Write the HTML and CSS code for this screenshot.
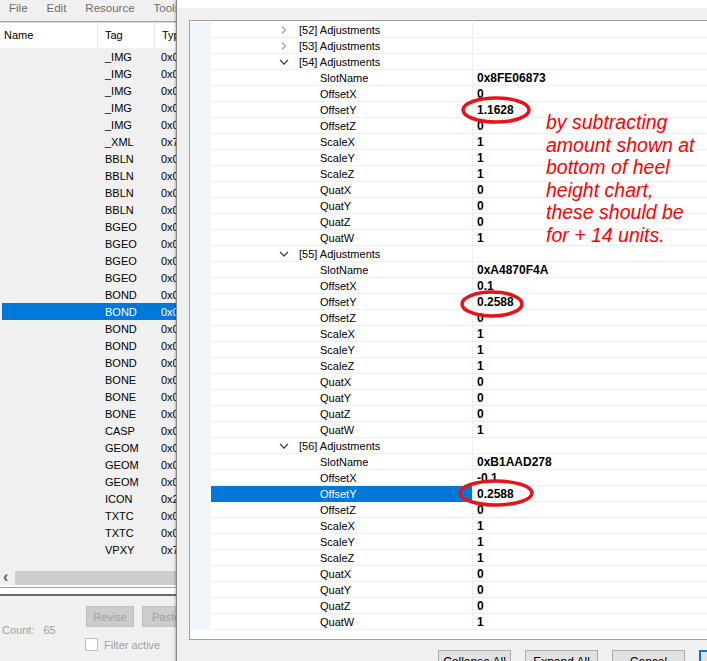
FILE: index.html
```html
<!DOCTYPE html>
<html lang="en">
<head>
  <meta charset="UTF-8">
  <title>Resource Editor</title>
  <link rel="stylesheet" href="styles.css">
</head>
<body>

<div class="main">
  <div class="menubar">
    <span>File</span>
    <span>Edit</span>
    <span>Resource</span>
    <span>Tools</span>
  </div>

  <div class="list-head">
    <div class="hcell name">Name</div>
    <div class="hcell">Tag</div>
    <div class="hcell">Type</div>
  </div>

  <div class="list">
    <div class="lrow"><span></span><span class="tag">_IMG</span><span class="type">0x00B2D882</span></div>
    <div class="lrow"><span></span><span class="tag">_IMG</span><span class="type">0x00B2D882</span></div>
    <div class="lrow"><span></span><span class="tag">_IMG</span><span class="type">0x00B2D882</span></div>
    <div class="lrow"><span></span><span class="tag">_IMG</span><span class="type">0x00B2D882</span></div>
    <div class="lrow"><span></span><span class="tag">_IMG</span><span class="type">0x00B2D882</span></div>
    <div class="lrow"><span></span><span class="tag">_XML</span><span class="type">0x73E93EEB</span></div>
    <div class="lrow"><span></span><span class="tag">BBLN</span><span class="type">0x00DE5AC5</span></div>
    <div class="lrow"><span></span><span class="tag">BBLN</span><span class="type">0x00DE5AC5</span></div>
    <div class="lrow"><span></span><span class="tag">BBLN</span><span class="type">0x00DE5AC5</span></div>
    <div class="lrow"><span></span><span class="tag">BBLN</span><span class="type">0x00DE5AC5</span></div>
    <div class="lrow"><span></span><span class="tag">BGEO</span><span class="type">0x067CAA11</span></div>
    <div class="lrow"><span></span><span class="tag">BGEO</span><span class="type">0x067CAA11</span></div>
    <div class="lrow"><span></span><span class="tag">BGEO</span><span class="type">0x067CAA11</span></div>
    <div class="lrow"><span></span><span class="tag">BGEO</span><span class="type">0x067CAA11</span></div>
    <div class="lrow"><span></span><span class="tag">BOND</span><span class="type">0x0355E0A6</span></div>
    <div class="lrow selected"><span></span><span class="tag">BOND</span><span class="type">0x0355E0A6</span></div>
    <div class="lrow"><span></span><span class="tag">BOND</span><span class="type">0x0355E0A6</span></div>
    <div class="lrow"><span></span><span class="tag">BOND</span><span class="type">0x0355E0A6</span></div>
    <div class="lrow"><span></span><span class="tag">BOND</span><span class="type">0x0355E0A6</span></div>
    <div class="lrow"><span></span><span class="tag">BONE</span><span class="type">0x00AE6C67</span></div>
    <div class="lrow"><span></span><span class="tag">BONE</span><span class="type">0x00AE6C67</span></div>
    <div class="lrow"><span></span><span class="tag">BONE</span><span class="type">0x00AE6C67</span></div>
    <div class="lrow"><span></span><span class="tag">CASP</span><span class="type">0x034AEECB</span></div>
    <div class="lrow"><span></span><span class="tag">GEOM</span><span class="type">0x015A1849</span></div>
    <div class="lrow"><span></span><span class="tag">GEOM</span><span class="type">0x015A1849</span></div>
    <div class="lrow"><span></span><span class="tag">GEOM</span><span class="type">0x015A1849</span></div>
    <div class="lrow"><span></span><span class="tag">ICON</span><span class="type">0x2E75C764</span></div>
    <div class="lrow"><span></span><span class="tag">TXTC</span><span class="type">0x033A1435</span></div>
    <div class="lrow"><span></span><span class="tag">TXTC</span><span class="type">0x033A1435</span></div>
    <div class="lrow"><span></span><span class="tag">VPXY</span><span class="type">0x736884F1</span></div>
  </div>

  <div class="hscroll">
    <span class="arrow">&#8249;</span>
    <span class="thumb"></span>
  </div>
  <div class="splitter"></div>

  <div class="footer">
    <div class="count">Count: <span class="num">65</span></div>
    <div class="actions">
      <div class="btn-row">
        <button class="btn-off">Revise</button>
        <button class="btn-off">Paste</button>
      </div>
      <label class="check"><span class="box"></span>Filter active</label>
    </div>
  </div>
</div>

<!-- editor dialog -->
<div class="dialog">
  <div class="dlg-title"></div>
  <div class="dlg-client">
    <div class="grid">
      <div class="prow"><i></i><div class="plabel group"><svg class="chev" viewBox="0 0 10 10"><path d="M3 1.5 L6.5 5 L3 8.5" class="closed"/></svg>[52] Adjustments</div><div class="pval"></div></div>
      <div class="prow"><i></i><div class="plabel group"><svg class="chev" viewBox="0 0 10 10"><path d="M3 1.5 L6.5 5 L3 8.5" class="closed"/></svg>[53] Adjustments</div><div class="pval"></div></div>

      <div class="prow"><i></i><div class="plabel group"><svg class="chev" viewBox="0 0 10 10"><path d="M1 3 L5 7 L9 3" class="open"/></svg>[54] Adjustments</div><div class="pval"></div></div>
      <div class="prow"><i></i><div class="plabel">SlotName</div><div class="pval">0x8FE06873</div></div>
      <div class="prow"><i></i><div class="plabel">OffsetX</div><div class="pval">0</div></div>
      <div class="prow"><i></i><div class="plabel">OffsetY</div><div class="pval">1.1628</div></div>
      <div class="prow"><i></i><div class="plabel">OffsetZ</div><div class="pval">0</div></div>
      <div class="prow"><i></i><div class="plabel">ScaleX</div><div class="pval">1</div></div>
      <div class="prow"><i></i><div class="plabel">ScaleY</div><div class="pval">1</div></div>
      <div class="prow"><i></i><div class="plabel">ScaleZ</div><div class="pval">1</div></div>
      <div class="prow"><i></i><div class="plabel">QuatX</div><div class="pval">0</div></div>
      <div class="prow"><i></i><div class="plabel">QuatY</div><div class="pval">0</div></div>
      <div class="prow"><i></i><div class="plabel">QuatZ</div><div class="pval">0</div></div>
      <div class="prow"><i></i><div class="plabel">QuatW</div><div class="pval">1</div></div>

      <div class="prow"><i></i><div class="plabel group"><svg class="chev" viewBox="0 0 10 10"><path d="M1 3 L5 7 L9 3" class="open"/></svg>[55] Adjustments</div><div class="pval"></div></div>
      <div class="prow"><i></i><div class="plabel">SlotName</div><div class="pval">0xA4870F4A</div></div>
      <div class="prow"><i></i><div class="plabel">OffsetX</div><div class="pval">0.1</div></div>
      <div class="prow"><i></i><div class="plabel">OffsetY</div><div class="pval">0.2588</div></div>
      <div class="prow"><i></i><div class="plabel">OffsetZ</div><div class="pval">0</div></div>
      <div class="prow"><i></i><div class="plabel">ScaleX</div><div class="pval">1</div></div>
      <div class="prow"><i></i><div class="plabel">ScaleY</div><div class="pval">1</div></div>
      <div class="prow"><i></i><div class="plabel">ScaleZ</div><div class="pval">1</div></div>
      <div class="prow"><i></i><div class="plabel">QuatX</div><div class="pval">0</div></div>
      <div class="prow"><i></i><div class="plabel">QuatY</div><div class="pval">0</div></div>
      <div class="prow"><i></i><div class="plabel">QuatZ</div><div class="pval">0</div></div>
      <div class="prow"><i></i><div class="plabel">QuatW</div><div class="pval">1</div></div>

      <div class="prow"><i></i><div class="plabel group"><svg class="chev" viewBox="0 0 10 10"><path d="M1 3 L5 7 L9 3" class="open"/></svg>[56] Adjustments</div><div class="pval"></div></div>
      <div class="prow"><i></i><div class="plabel">SlotName</div><div class="pval">0xB1AAD278</div></div>
      <div class="prow"><i></i><div class="plabel">OffsetX</div><div class="pval">-0.1</div></div>
      <div class="prow active"><i></i><div class="plabel">OffsetY</div><div class="pval">0.2588</div></div>
      <div class="prow"><i></i><div class="plabel">OffsetZ</div><div class="pval">0</div></div>
      <div class="prow"><i></i><div class="plabel">ScaleX</div><div class="pval">1</div></div>
      <div class="prow"><i></i><div class="plabel">ScaleY</div><div class="pval">1</div></div>
      <div class="prow"><i></i><div class="plabel">ScaleZ</div><div class="pval">1</div></div>
      <div class="prow"><i></i><div class="plabel">QuatX</div><div class="pval">0</div></div>
      <div class="prow"><i></i><div class="plabel">QuatY</div><div class="pval">0</div></div>
      <div class="prow"><i></i><div class="plabel">QuatZ</div><div class="pval">0</div></div>
      <div class="prow"><i></i><div class="plabel">QuatW</div><div class="pval">1</div></div>
    </div>

    <div class="dlg-buttons">
      <button class="btn">Collapse All</button>
      <button class="btn">Expand All</button>
      <button class="btn">Cancel</button>
      <button class="btn default">OK</button>
    </div>
  </div>
</div>

<!-- red pen notes -->
<svg class="marks" width="707" height="661" viewBox="0 0 707 661">
  <ellipse cx="496" cy="110" rx="33" ry="12"/>
  <ellipse cx="492" cy="304" rx="30" ry="12"/>
  <ellipse cx="496" cy="493" rx="36" ry="12"/>
</svg>
<div class="note">by subtracting<br>amount shown at<br>bottom of heel<br>height chart,<br>these should be<br>for + 14 units.</div>

</body>
</html>
```

FILE: styles.css
```css
* { box-sizing: border-box; }
body { margin: 0; width: 707px; height: 661px; overflow: hidden; position: relative; background: #f0f0f0; font-family: "Liberation Sans", Arial, sans-serif; font-size: 11px; color: #000; }

/* main window */
.main { display: flex; flex-direction: column; height: 661px; }
.menubar { height: 21px; display: flex; align-items: flex-start; gap: 19px; padding: 2px 0 0 9px; line-height: 13px; background: #f0f0f0; color: #6d6d6d; font-size: 11.5px; }
.list-head { height: 27px; display: grid; grid-template-columns: 98px 57px 1fr; background: #fff; border-top: 1px solid #a0a0a0; box-shadow: inset 0 1px 0 #d9d9d9; }
.hcell { display: flex; align-items: center; padding-left: 7px; border-right: 1px solid #e5e5e5; }
.hcell.name { padding-left: 4px; }
.list { height: 521px; background: #f0f0f0; overflow: hidden; }
.lrow { height: 17px; margin-left: 2px; display: grid; grid-template-columns: 96px 57px 1fr; align-items: center; white-space: nowrap; overflow: hidden; }
.lrow .tag { padding-left: 7px; }
.lrow .type { padding-left: 6px; }
.lrow.selected { background: #0078d7; color: #fff; }
.hscroll { height: 16px; padding-top: 2px; display: flex; background: #f0f0f0; }
.arrow { width: 15px; line-height: 12px; padding-left: 3px; font-size: 16px; font-weight: bold; color: #606060; }
.thumb { flex: 1; height: 14px; background: #cdcdcd; }
.splitter { height: 11px; background: linear-gradient(#fff 0 2px, #a0a0a0 2px 3px, #fff 3px 9px, #6b6b6b 9px 11px); }
.footer { flex: 1; display: flex; padding-top: 10px; color: #a0a0a0; }
.count { width: 85px; padding: 18px 0 0 2px; }
.count .num { margin-left: 6px; }
.actions { display: flex; flex-direction: column; }
.btn-row { display: flex; gap: 8px; margin-left: 1px; }
.btn-off { width: 48px; height: 21px; padding: 0; font: inherit; background: #cccccc; border: 1px solid #bfbfbf; color: #a0a0a0; }
.check { display: flex; align-items: center; gap: 6px; margin-top: 11px; }
.box { width: 13px; height: 13px; background: #fff; border: 1px solid #bcbcbc; }

/* editor dialog */
.dialog { position: absolute; left: 176px; top: 0; width: 608px; height: 700px; background: #f0f0f0; border-left: 1px solid #8c8c8c; box-shadow: -1px 0 2px rgba(0, 0, 0, 0.25); }
.dlg-title { height: 8px; background: #fff; }
.dlg-client { padding: 12px 12px 0 12px; }
.grid { height: 620px; padding-top: 1px; background: #fff; border: 1px solid #a0a0a0; }
.prow { height: 16px; display: grid; grid-template-columns: 21px 261px 1fr; }
.prow i { background: #f2f5fa; }
.plabel { display: flex; align-items: center; padding-left: 109px; border-bottom: 1px solid #f0f0f0; white-space: nowrap; }
.plabel.group { padding-left: 68px; }
.chev { width: 10px; height: 10px; margin-right: 10px; }
.chev path { fill: none; stroke-width: 1.3; }
.chev .closed { stroke: #a6a6a6; }
.chev .open { stroke: #404040; }
.pval { display: flex; align-items: center; padding-left: 4px; font-size: 12px; font-weight: bold; border-left: 1px solid #f0f0f0; border-bottom: 1px solid #f0f0f0; }
.prow.active .plabel { background: #0078d7; color: #fff; border-bottom-color: #0078d7; }
.dlg-buttons { display: flex; justify-content: flex-end; gap: 14px; margin-top: 10px; }
.btn { width: 73px; height: 23px; padding: 0; font: inherit; font-size: 12px; background: #e1e1e1; border: 1px solid #adadad; color: #000; }
.btn.default { border: 2px solid #0078d7; }

/* annotations */
.marks { position: absolute; left: 0; top: 0; pointer-events: none; }
.marks ellipse { fill: none; stroke: #e8121b; stroke-width: 3.5; }
.note { position: absolute; left: 546px; top: 111px; font-size: 19.5px; line-height: 22.6px; font-style: italic; color: #f00; }
```
